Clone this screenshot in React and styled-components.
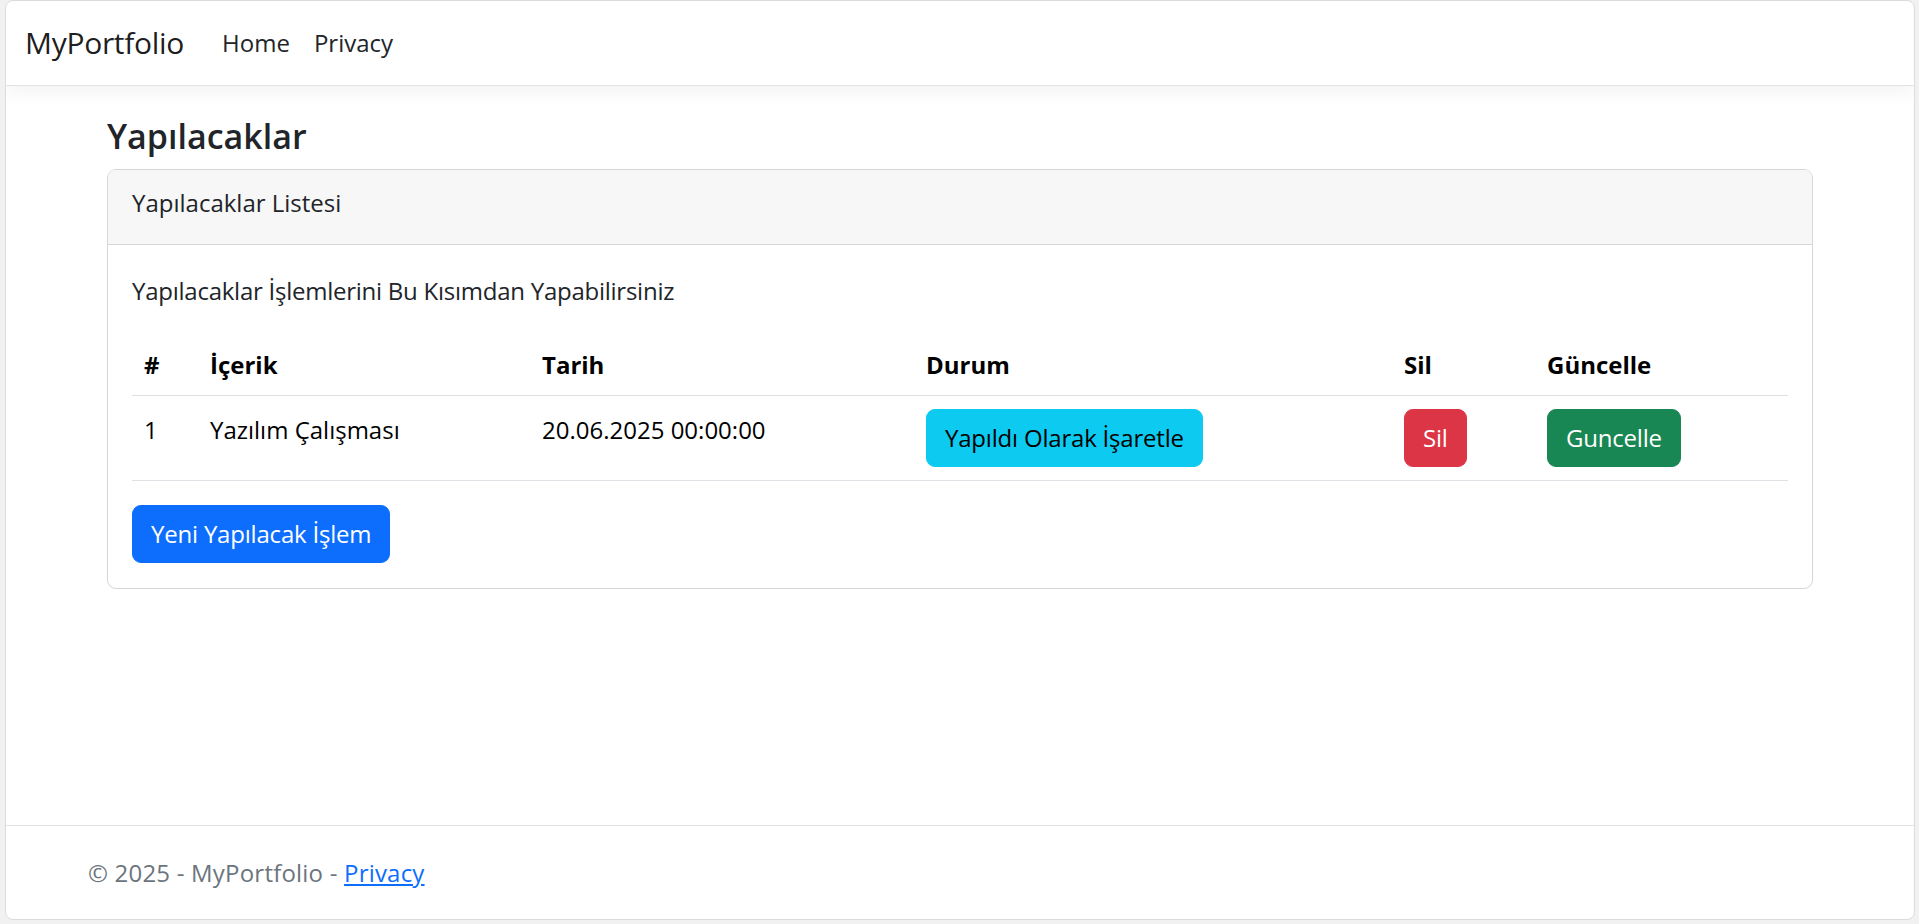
import React from 'react'
import styled, { createGlobalStyle } from 'styled-components'

const todos = [
  { id: 1, content: 'Yazılım Çalışması', date: '20.06.2025 00:00:00' },
]

const columns = [
  { label: '#', w: 66 },
  { label: 'İçerik', w: 332 },
  { label: 'Tarih', w: 384 },
  { label: 'Durum', w: 478 },
  { label: 'Sil', w: 143 },
  { label: 'Güncelle', w: 253 },
]

const GlobalStyle = createGlobalStyle`
  * { box-sizing: border-box; }
  html, body { margin: 0; padding: 0; }
  body {
    background: #f1f1f1;
    font-family: "Open Sans", "Noto Sans", sans-serif;
    color: #212529;
  }
`

const Frame = styled.div`
  height: 920px;
  margin: 0 4px 0 5px;
  background: #fff;
  border: 1px solid #dcdcdc;
  border-radius: 8px;
  display: flex;
  flex-direction: column;
  overflow: hidden;
`

const Navbar = styled.nav`
  height: 85px;
  flex: none;
  display: flex;
  align-items: center;
  padding: 0 19px 2px;
  border-bottom: 1px solid #e3e3e3;
  box-shadow: 0 6px 18px rgba(0, 0, 0, 0.05);
  position: relative;
`

const Brand = styled.a`
  font-size: 30px;
  letter-spacing: -0.3px;
  color: rgba(0, 0, 0, 0.9);
  text-decoration: none;
  margin-right: 26px;
`

const NavLink = styled.a`
  font-size: 24px;
  color: #212529;
  text-decoration: none;
  padding: 0 12px;
`

const Main = styled.main`
  flex: 1;
  padding-top: 24px;
`

const Container = styled.div`
  width: 1706px;
  margin: 0 auto;
`

const Title = styled.h4`
  margin: 5px 0 11px;
  font-size: 34px;
  font-weight: 600;
  line-height: 43px;
  color: #212529;
`

const Card = styled.div`
  border: 1px solid #d6d6d6;
  border-radius: 9px;
  overflow: hidden;
`

const CardHeader = styled.div`
  background: #f7f7f7;
  border-bottom: 1px solid #d6d6d6;
  padding: 15px 24px 23px;
  font-size: 24px;
  line-height: 36px;
`

const CardBody = styled.div`
  padding: 28px 24px 25px;
`

const Lead = styled.p`
  margin: 0 0 24px;
  font-size: 24px;
  line-height: 36px;
  letter-spacing: -0.25px;
`

const Table = styled.table`
  width: 100%;
  border-collapse: collapse;
  table-layout: fixed;
  margin-bottom: 24px;
  color: #000;
  font-size: 24px;
  line-height: 36px;
`

const HeadCell = styled.th`
  width: ${p => p.$w}px;
  text-align: left;
  font-weight: 700;
  padding: 14px 12px 12px;
  border-bottom: 1px solid #dee2e6;
`

const Cell = styled.td`
  vertical-align: top;
  padding: ${p => (p.$button ? '13px' : '16px')} 12px 13px;
  border-bottom: 1px solid #dee2e6;
`

const variants = {
  info: { bg: '#0dcaf0', fg: '#000' },
  danger: { bg: '#dc3545', fg: '#fff' },
  success: { bg: '#198754', fg: '#fff' },
  primary: { bg: '#0d6efd', fg: '#fff' },
}

const Button = styled.button`
  font-family: inherit;
  font-size: 24px;
  line-height: 36px;
  letter-spacing: -0.2px;
  padding: 10px 18px;
  border: 1px solid ${p => variants[p.$variant].bg};
  border-radius: 9px;
  background: ${p => variants[p.$variant].bg};
  color: ${p => variants[p.$variant].fg};
  cursor: pointer;
`

const Footer = styled.footer`
  flex: none;
  height: 94px;
  border-top: 1px solid #e3e3e3;
  padding-left: 82px;
  font-size: 24px;
  letter-spacing: 0.2px;
  line-height: 93px;
  color: #6c757d;

  a {
    color: #0d6efd;
  }
`

export default function App() {
  return (
    <>
      <GlobalStyle />
      <Frame>
        <Navbar>
          <Brand href="#">MyPortfolio</Brand>
          <NavLink href="#">Home</NavLink>
          <NavLink href="#">Privacy</NavLink>
        </Navbar>

        <Main>
          <Container>
            <Title>Yapılacaklar</Title>
            <Card>
              <CardHeader>Yapılacaklar Listesi</CardHeader>
              <CardBody>
                <Lead>Yapılacaklar İşlemlerini Bu Kısımdan Yapabilirsiniz</Lead>
                <Table>
                  <thead>
                    <tr>
                      {columns.map(c => (
                        <HeadCell key={c.label} $w={c.w}>{c.label}</HeadCell>
                      ))}
                    </tr>
                  </thead>
                  <tbody>
                    {todos.map(t => (
                      <tr key={t.id}>
                        <Cell>{t.id}</Cell>
                        <Cell>{t.content}</Cell>
                        <Cell>{t.date}</Cell>
                        <Cell $button><Button $variant="info">Yapıldı Olarak İşaretle</Button></Cell>
                        <Cell $button><Button $variant="danger">Sil</Button></Cell>
                        <Cell $button><Button $variant="success">Guncelle</Button></Cell>
                      </tr>
                    ))}
                  </tbody>
                </Table>
                <Button $variant="primary">Yeni Yapılacak İşlem</Button>
              </CardBody>
            </Card>
          </Container>
        </Main>

        <Footer>
          © 2025 - MyPortfolio - <a href="#">Privacy</a>
        </Footer>
      </Frame>
    </>
  )
}
